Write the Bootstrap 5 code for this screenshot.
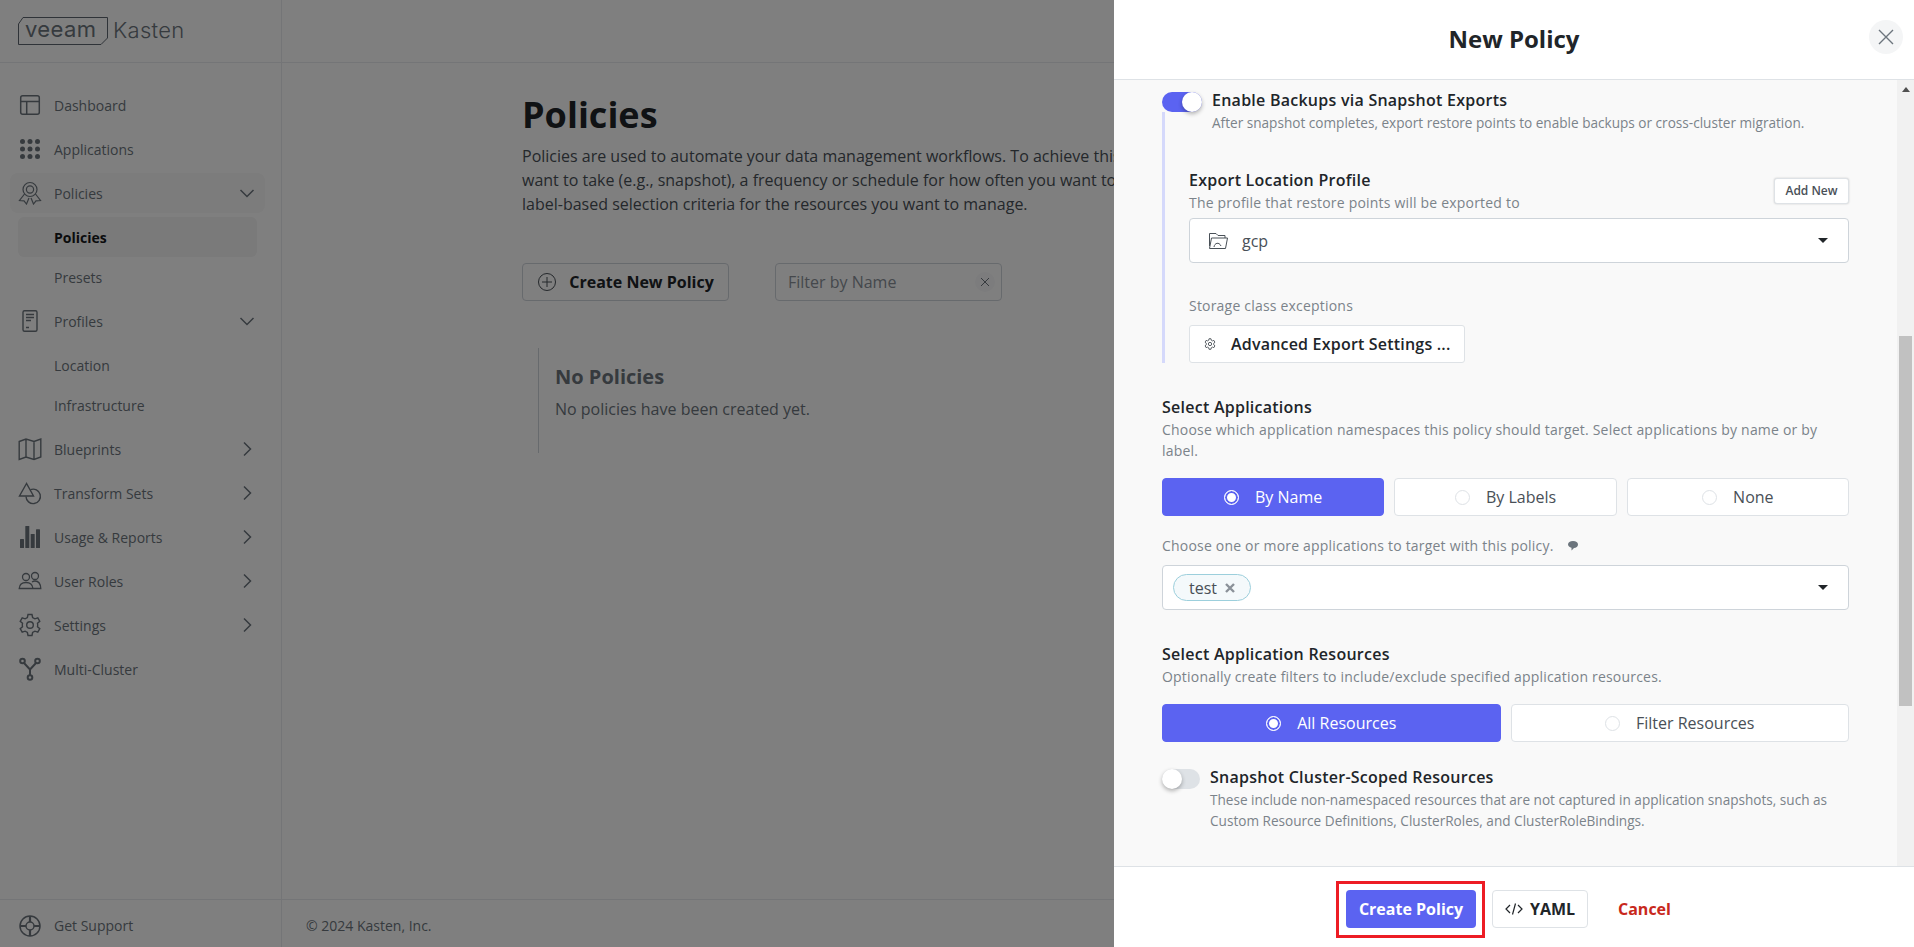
<!DOCTYPE html>
<html lang="en">
  <head>
    <meta charset="UTF-8" />
    <meta name="viewport" content="width=device-width, initial-scale=1.0" />
    <title>Policies - Veeam Kasten</title>
    <link
      href="https://cdn.jsdelivr.net/npm/bootstrap@5.3.2/dist/css/bootstrap.min.css"
      rel="stylesheet"
    />
    <style>
      body {
        font-family: "Open Sans", sans-serif;
        font-size: 14px;
        overflow: hidden;
        color: #212529;
      }
      .app-shell {
        height: 947px;
      }
      /* left navigation */
      .side-col {
        width: 282px;
        flex: none;
        border-right: 1px solid #e9ebee;
        color: #6c757d;
      }
      .logo-bar {
        height: 63px;
        flex: none;
        border-bottom: 1px solid #e9ebee;
        padding: 17px 0 0 18px;
      }
      .side-nav {
        padding: 20px 16px 0 10px;
      }
      .nav-row {
        height: 44px;
        padding: 0 10px;
        color: #6c757d;
        text-decoration: none;
      }
      .nav-row svg.nav-ico {
        width: 24px;
        height: 24px;
        margin-left: -2px;
        margin-right: 12px;
        flex: none;
      }
      .nav-chev {
        width: 18px;
        height: 18px;
        margin-right: -1px;
      }
      .nav-row.is-open {
        height: 40px;
        margin-top: 2px;
        margin-bottom: 2px;
        background: #f8f8f8;
        border-radius: 8px;
      }
      .sub-group {
        padding: 2px 0;
      }
      .sub-row {
        height: 40px;
        padding-left: 36px;
        margin: 0 8px;
        color: #6c757d;
        text-decoration: none;
      }
      .sub-row.is-current {
        background: #f4f4f4;
        border-radius: 6px;
        font-weight: 700;
        color: #16181b;
      }
      .side-foot {
        height: 48px;
        flex: none;
        border-top: 1px solid #e9ebee;
        padding: 4px 20px 0;
      }
      .side-foot svg {
        width: 24px;
        height: 24px;
        margin-left: -2px;
        margin-right: 12px;
      }
      /* main column */
      .top-gap {
        height: 63px;
        flex: none;
        border-bottom: 1px solid #e9ebee;
      }
      .main-body {
        padding: 27px 0 0 240px;
      }
      .page-title {
        font-size: 36px;
        font-weight: 700;
        line-height: 50px;
        margin: 0 0 4px;
        color: #212529;
      }
      .page-desc {
        font-size: 16px;
        line-height: 24px;
        color: #495057;
        white-space: nowrap;
        margin: 0 0 47px;
      }
      .new-btn {
        width: 207px;
        height: 38px;
        font-size: 16px;
        font-weight: 700;
        color: #212529;
        background: #fff;
        border: 1px solid #ced4da;
        border-radius: 4px;
      }
      .new-btn svg {
        width: 20px;
        height: 20px;
      }
      .filter-wrap {
        width: 227px;
        margin-left: 46px;
      }
      .filter-input {
        height: 38px;
        font-size: 16px;
        border-color: #ced4da;
        border-radius: 4px;
        padding-left: 12px;
      }
      .filter-input::placeholder {
        color: #8a9199;
      }
      .filter-x {
        width: 20px;
        height: 20px;
        top: 9px;
        right: 7px;
        border-radius: 50%;
        background: #f8f9fa;
      }
      .empty-box {
        margin: 47px 0 0 16px;
        height: 105px;
        border-left: 1px solid #ced4da;
        padding: 14px 0 0 16px;
        color: #6c757d;
      }
      .empty-title {
        font-size: 20px;
        font-weight: 700;
        line-height: 30px;
        margin: 0 0 5px;
        color: #6c757d;
      }
      .empty-text {
        font-size: 16px;
        line-height: 24px;
        margin: 0;
      }
      .main-foot {
        height: 48px;
        flex: none;
        border-top: 1px solid #e9ebee;
        padding: 4px 0 0 24px;
        color: #6c757d;
      }
      /* overlay and panel */
      .dim-layer {
        position: fixed;
        inset: 0;
        background: rgba(0, 0, 0, 0.5);
      }
      .side-panel {
        position: fixed;
        top: 0;
        right: 0;
        bottom: 0;
        width: 800px;
        background: #fff;
      }
      .panel-head {
        height: 80px;
        flex: none;
        border-bottom: 1px solid #dee2e6;
      }
      .panel-title {
        font-size: 24px;
        font-weight: 700;
        margin: 0;
        color: #212529;
      }
      .panel-close {
        width: 34px;
        height: 34px;
        top: 20px;
        right: 11px;
        border: 0;
        border-radius: 50%;
        background: #f4f5f6;
        padding: 0;
      }
      .panel-mid {
        min-height: 0;
        background: #f9f9f9;
      }
      .panel-form {
        padding: 12px 48px 0 48px;
        width: 783px;
        flex: none;
      }
      .fake-scroll {
        width: 17px;
        flex: none;
        background: #f1f1f1;
      }
      .scroll-up {
        width: 0;
        height: 0;
        margin: 7px auto 0;
        border-left: 4px solid transparent;
        border-right: 4px solid transparent;
        border-bottom: 5px solid #505050;
      }
      .scroll-thumb {
        height: 370px;
        margin: 244px 2px 0;
        background: #c1c1c1;
      }
      .tog-row {
        gap: 10px;
      }
      .tog {
        width: 38px;
        height: 20px;
        flex: none;
        border-radius: 10px;
        background: #dee2e6;
        position: relative;
      }
      .tog::after {
        content: "";
        position: absolute;
        top: 0;
        left: 0;
        width: 20px;
        height: 20px;
        border-radius: 50%;
        background: #fff;
        box-shadow: 0 2px 4px rgba(0, 0, 0, 0.3);
      }
      .tog.is-on {
        width: 40px;
        background: #5b63f1;
      }
      .tog.is-on::after {
        left: 20px;
      }
      .tog-text {
        margin-top: -2px;
      }
      .opt-title {
        font-size: 16px;
        font-weight: 600;
        line-height: 20px;
        letter-spacing: 0.25px;
        margin-bottom: 2px;
        color: #212529;
      }
      .opt-help {
        font-size: 14px;
        line-height: 21px;
        letter-spacing: 0.2px;
        color: #7b838a;
      }
      .tog-text .opt-help {
        font-size: 13.6px;
        letter-spacing: 0;
      }
      .sec-indent {
        margin-top: -21px;
        border-left: 3px solid #d5d9fb;
        padding: 58px 0 0 24px;
      }
      .addnew-btn {
        width: 75px;
        height: 26px;
        margin-top: 8px;
        padding: 0;
        font-size: 12px;
        font-weight: 600;
        color: #495057;
        background: #fff;
        border: 1px solid #dee2e6;
        border-radius: 3px;
        box-shadow: 0 0 2px rgba(0, 0, 0, 0.2);
      }
      .sel-box {
        height: 45px;
        background: #fff;
        border: 1px solid #ced4da;
        border-radius: 4px;
        padding: 0 20px 0 18px;
      }
      .sel-box.has-tag {
        margin-top: 9px;
        padding-left: 10px;
      }
      .sel-top {
        margin-top: 5px;
      }
      .sel-caret {
        width: 0;
        height: 0;
        border-left: 5px solid transparent;
        border-right: 5px solid transparent;
        border-top: 5px solid #212529;
      }
      .sel-value {
        font-size: 16px;
        margin-left: 13px;
        color: #495057;
      }
      .storage-note {
        margin-top: 32px;
      }
      .adv-btn {
        width: 276px;
        height: 38px;
        margin-top: 9px;
        gap: 15px;
        font-size: 16px;
        font-weight: 600;
        letter-spacing: 0.2px;
        color: #212529;
        background: #fff;
        border: 1px solid #dee2e6;
        border-radius: 3px;
        padding: 0 0 0 14px;
      }
      .sec-head {
        margin-top: 34px;
      }
      .choice-row {
        gap: 10px;
        margin-top: 17px;
      }
      .choice-tile {
        flex: 1 1 0;
        height: 38px;
        padding: 0;
        font-size: 16px;
        color: #495057;
        background: #fff;
        border: 1px solid #dee2e6;
        border-radius: 4px;
        gap: 16px;
      }
      .choice-tile .dot-ring {
        width: 15px;
        height: 15px;
        border-radius: 50%;
        border: 1px solid #dee2e6;
        background: #fff;
      }
      .choice-tile.is-picked {
        background: #5b63f1;
        border-color: #5b63f1;
        color: #fff;
      }
      .choice-tile.is-picked .dot-ring {
        border-color: #fff;
        background: #fff;
        box-shadow: inset 0 0 0 2px #5b63f1;
      }
      .hint-line {
        margin-top: 19px;
        gap: 13px;
      }
      .tag-chip {
        height: 27px;
        padding: 0 15px;
        gap: 8px;
        font-size: 16px;
        color: #495057;
        background: #f4f9fb;
        border: 1px solid #9ccfdc;
        border-radius: 14px;
      }
      .cluster-row {
        margin-top: 27px;
      }
      .footer-bar {
        height: 81px;
        flex: none;
        border-top: 1px solid #dee2e6;
        padding-top: 14px;
      }
      .mark-box {
        border: 3px solid #ed1c24;
        padding: 6px 6px 7px 7px;
        margin-left: 222px;
      }
      .go-btn {
        width: 130px;
        height: 38px;
        padding: 0;
        font-size: 16px;
        font-weight: 700;
        color: #fff;
        background: #5b63f1;
        border: 0;
        border-radius: 4px;
      }
      .yaml-btn {
        width: 96px;
        height: 38px;
        padding: 0;
        margin: 9px 0 0 7px;
        font-size: 16px;
        font-weight: 700;
        color: #212529;
        background: #fff;
        border: 1px solid #dee2e6;
        border-radius: 4px;
        gap: 7px;
      }
      .cancel-btn {
        height: 38px;
        font-size: 16px;
        font-weight: 700;
        color: #c8281c;
        background: none;
        border: 0;
        padding: 0;
        margin: 9px 0 0 30px;
      }
    </style>
  </head>
  <body>
    <div class="app-shell d-flex">
      <!-- Sidebar -->
      <aside class="side-col d-flex flex-column">
        <div class="logo-bar">
          <svg width="168" height="28" viewBox="0 0 168 28" fill="none">
            <path d="M5 .5H89.500V21L83 27.500H.5V7Z" stroke="#5f6771" stroke-width="1" />
            <text x="7" y="20" font-family="Inter, sans-serif" font-size="22" fill="#6c757d" letter-spacing=".4">veeam</text>
            <text x="95" y="21" font-family="Inter, sans-serif" font-size="22" font-weight="300" fill="#6c757d" letter-spacing=".3">Kasten</text>
          </svg>
        </div>
        <nav class="side-nav flex-grow-1">
          <a href="#" class="nav-row d-flex align-items-center">
            <svg class="nav-ico" viewBox="0 0 24 24" fill="none" stroke="currentColor" stroke-width="1.5"><rect x="2.7" y="2.7" width="18.6" height="18.6" rx="2" /><path d="M2.7 8.5H21.3M8.7 8.5V21.3" /></svg>
            <span>Dashboard</span>
          </a>
          <a href="#" class="nav-row d-flex align-items-center">
            <svg class="nav-ico" viewBox="0 0 24 24" fill="currentColor"><circle cx="4.5" cy="4.5" r="2.5" /><circle cx="12" cy="4.5" r="2.5" /><circle cx="19.5" cy="4.5" r="2.5" /><circle cx="4.5" cy="12" r="2.5" /><circle cx="12" cy="12" r="2.5" /><circle cx="19.5" cy="12" r="2.5" /><circle cx="4.5" cy="19.5" r="2.5" /><circle cx="12" cy="19.5" r="2.5" /><circle cx="19.5" cy="19.5" r="2.5" /></svg>
            <span>Applications</span>
          </a>
          <a href="#" class="nav-row is-open d-flex align-items-center">
            <svg class="nav-ico" viewBox="0 0 24 24" fill="none" stroke="currentColor" stroke-width="1.2"><circle cx="12" cy="8.5" r="7" /><circle cx="12" cy="8.5" r="3.6" /><path d="M6.5 13 1.5 19.5 6 19.8 8.5 23 11 17M17.5 13 22.5 19.5 18 19.8 15.5 23 13 17" /></svg>
            <span class="flex-grow-1">Policies</span>
            <svg class="nav-chev" viewBox="0 0 18 18" fill="none" stroke="currentColor" stroke-width="1.5"><path d="M2.5 6 9 12.5 15.5 6" /></svg>
          </a>
          <div class="sub-group">
            <a href="#" class="sub-row is-current d-flex align-items-center">Policies</a>
            <a href="#" class="sub-row d-flex align-items-center">Presets</a>
          </div>
          <a href="#" class="nav-row d-flex align-items-center">
            <svg class="nav-ico" viewBox="0 0 24 24" fill="none" stroke="currentColor" stroke-width="1.4"><rect x="5" y="1.7" width="14" height="20.6" rx="1.5" /><path d="M8 5.5H16M8 8.5H16M8 11.5H13M8 18.5H11" /></svg>
            <span class="flex-grow-1">Profiles</span>
            <svg class="nav-chev" viewBox="0 0 18 18" fill="none" stroke="currentColor" stroke-width="1.5"><path d="M2.5 6 9 12.5 15.5 6" /></svg>
          </a>
          <div class="sub-group">
            <a href="#" class="sub-row d-flex align-items-center">Location</a>
            <a href="#" class="sub-row d-flex align-items-center">Infrastructure</a>
          </div>
          <a href="#" class="nav-row d-flex align-items-center">
            <svg class="nav-ico" viewBox="0 0 24 24" fill="none" stroke="currentColor" stroke-width="1.4"><path d="M1.2 4.5 8 2l8 2.5L22.8 2V20L16 22.5 8 20 1.2 22.5ZM8 2V20M16 4.5V22.5" /></svg>
            <span class="flex-grow-1">Blueprints</span>
            <svg class="nav-chev" viewBox="0 0 18 18" fill="none" stroke="currentColor" stroke-width="1.5"><path d="M6 2.5 12.5 9 6 15.5" /></svg>
          </a>
          <a href="#" class="nav-row d-flex align-items-center">
            <svg class="nav-ico" viewBox="0 0 24 24" fill="none" stroke="currentColor" stroke-width="1.4"><path d="M8.5 2.5 1.5 15H15.5Z" /><path d="M12.5 8.7A7.2 7.2 0 1 1 8 15.5" /></svg>
            <span class="flex-grow-1">Transform Sets</span>
            <svg class="nav-chev" viewBox="0 0 18 18" fill="none" stroke="currentColor" stroke-width="1.5"><path d="M6 2.5 12.5 9 6 15.5" /></svg>
          </a>
          <a href="#" class="nav-row d-flex align-items-center">
            <svg class="nav-ico" viewBox="0 0 24 24" fill="currentColor"><rect x="2" y="14" width="4" height="9" rx=".5" /><rect x="7.300" y="1" width="4" height="22" rx=".5" /><rect x="12.700" y="9" width="4" height="14" rx=".5" /><rect x="18" y="4.300" width="4" height="18.700" rx=".5" /></svg>
            <span class="flex-grow-1">Usage &amp; Reports</span>
            <svg class="nav-chev" viewBox="0 0 18 18" fill="none" stroke="currentColor" stroke-width="1.5"><path d="M6 2.5 12.5 9 6 15.5" /></svg>
          </a>
          <a href="#" class="nav-row d-flex align-items-center">
            <svg class="nav-ico" viewBox="0 0 24 24" fill="none" stroke="currentColor" stroke-width="1.3"><circle cx="8" cy="8" r="3.5" /><circle cx="17" cy="7" r="3.5" /><path d="M1.2 19.5C1.5 15.5 4.5 13.5 8 13.5S14.5 15.5 15 19.5ZM14 13C15 12.3 16 12 17 12 20 12 22.5 14.5 22.8 19.5H15" /></svg>
            <span class="flex-grow-1">User Roles</span>
            <svg class="nav-chev" viewBox="0 0 18 18" fill="none" stroke="currentColor" stroke-width="1.5"><path d="M6 2.5 12.5 9 6 15.5" /></svg>
          </a>
          <a href="#" class="nav-row d-flex align-items-center">
            <svg class="nav-ico" viewBox="0 0 24 24" fill="none" stroke="currentColor" stroke-width="1.4"><circle cx="12" cy="12" r="3.3" /><path d="M10 1.5h4l.6 3 2.3 1.3 2.9-1 2 3.5-2.3 2a7 7 0 0 1 0 3.4l2.3 2-2 3.5-2.9-1-2.3 1.3-.6 3h-4l-.6-3-2.3-1.3-2.9 1-2-3.5 2.3-2a7 7 0 0 1 0-3.4l-2.3-2 2-3.5 2.9 1 2.3-1.3Z" /></svg>
            <span class="flex-grow-1">Settings</span>
            <svg class="nav-chev" viewBox="0 0 18 18" fill="none" stroke="currentColor" stroke-width="1.5"><path d="M6 2.5 12.5 9 6 15.5" /></svg>
          </a>
          <a href="#" class="nav-row d-flex align-items-center">
            <svg class="nav-ico" viewBox="0 0 24 24" fill="none" stroke="currentColor" stroke-width="2"><circle cx="4.5" cy="4" r="2.3" /><circle cx="19.5" cy="4" r="2.3" /><circle cx="12" cy="20.500" r="2.300" /><path d="M6 6 12 12.500 18 6M12 12.500V18" /></svg>
            <span>Multi-Cluster</span>
          </a>
        </nav>
        <div class="side-foot d-flex align-items-center">
          <svg viewBox="0 0 24 24" fill="none" stroke="currentColor" stroke-width="1.500"><circle cx="12" cy="12" r="10" /><circle cx="12" cy="12" r="4" /><path stroke-width="2.200" d="M12 2V8M12 16V22M2 12H8M16 12H22" /></svg>
          <span>Get Support</span>
        </div>
      </aside>

      <!-- Main content -->
      <main class="flex-grow-1 d-flex flex-column">
        <div class="top-gap"></div>
        <div class="main-body flex-grow-1">
          <h1 class="page-title">Policies</h1>
          <p class="page-desc">
            Policies are used to automate your data management workflows. To achieve this, you will define the actions you<br />
            want to take (e.g., snapshot), a frequency or schedule for how often you want to take that action, and<br />
            label-based selection criteria for the resources you want to manage.
          </p>
          <div class="d-flex align-items-center">
            <button class="btn new-btn d-flex align-items-center justify-content-center gap-2" type="button">
              <svg viewBox="0 0 20 20" fill="none" stroke="#495057" stroke-width="1"><circle cx="10" cy="10" r="8.5" /><path d="M10 5V15M5 10H15" /></svg>
              <span class="ms-1">Create New Policy</span>
            </button>
            <div class="filter-wrap position-relative">
              <input class="form-control filter-input" type="text" placeholder="Filter by Name" />
              <span class="filter-x position-absolute d-flex align-items-center justify-content-center">
                <svg width="10" height="10" viewBox="0 0 10 10" stroke="#6c757d" stroke-width="1"><path d="M1 1 9 9M9 1 1 9" /></svg>
              </span>
            </div>
          </div>
          <div class="empty-box">
            <h5 class="empty-title">No Policies</h5>
            <p class="empty-text">No policies have been created yet.</p>
          </div>
        </div>
        <div class="main-foot d-flex align-items-center">© 2024 Kasten, Inc.</div>
      </main>
    </div>

    <div class="dim-layer"></div>

    <!-- New Policy panel -->
    <section class="side-panel d-flex flex-column">
      <div class="panel-head position-relative d-flex align-items-center justify-content-center">
        <h2 class="panel-title">New Policy</h2>
        <button class="panel-close position-absolute d-flex align-items-center justify-content-center" type="button" aria-label="Close">
          <svg width="16" height="16" viewBox="0 0 16 16" stroke="#6c757d" stroke-width="1.4"><path d="M1 1 15 15M15 1 1 15" /></svg>
        </button>
      </div>

      <div class="panel-mid flex-grow-1 d-flex">
        <div class="panel-form">
          <div class="tog-row d-flex align-items-start">
            <span class="tog is-on"></span>
            <div class="tog-text">
              <div class="opt-title">Enable Backups via Snapshot Exports</div>
              <div class="opt-help">After snapshot completes, export restore points to enable backups or cross-cluster migration.</div>
            </div>
          </div>

          <div class="sec-indent">
            <div class="d-flex justify-content-between align-items-start">
              <div>
                <div class="opt-title">Export Location Profile</div>
                <div class="opt-help">The profile that restore points will be exported to</div>
              </div>
              <button class="btn addnew-btn" type="button">Add New</button>
            </div>
            <div class="sel-box sel-top d-flex align-items-center justify-content-between">
              <div class="d-flex align-items-center">
                <svg width="21" height="20" viewBox="0 0 21 20" fill="none" stroke="#495057" stroke-width="1"><path d="M1.500 15V2.500H8L10 4.500H17V7M1.500 17.500 3.500 7H19.500L17.500 17.500ZM6 16C6.500 12 11 10.500 13 15" /></svg>
                <span class="sel-value">gcp</span>
              </div>
              <span class="sel-caret"></span>
            </div>
            <div class="opt-help storage-note">Storage class exceptions</div>
            <button class="btn adv-btn d-flex align-items-center" type="button">
              <svg width="12" height="12" viewBox="0 0 24 24" fill="none" stroke="#495057" stroke-width="1.800"><circle cx="12" cy="12" r="3.300" /><path d="M10 1.500h4l.6 3 2.300 1.300 2.900-1 2 3.500-2.300 2a7 7 0 0 1 0 3.400l2.300 2-2 3.500-2.900-1-2.300 1.300-.6 3h-4l-.6-3-2.300-1.300-2.900 1-2-3.500 2.300-2a7 7 0 0 1 0-3.400l-2.300-2 2-3.500 2.900 1 2.300-1.300Z" /></svg>
              <span>Advanced Export Settings ...</span>
            </button>
          </div>

          <div class="sec-head">
            <div class="opt-title">Select Applications</div>
            <div class="opt-help">Choose which application namespaces this policy should target. Select applications by name or by label.</div>
          </div>
          <div class="choice-row d-flex">
            <button class="btn choice-tile is-picked d-flex align-items-center justify-content-center" type="button"><span class="dot-ring"></span><span>By Name</span></button>
            <button class="btn choice-tile d-flex align-items-center justify-content-center" type="button"><span class="dot-ring"></span><span>By Labels</span></button>
            <button class="btn choice-tile d-flex align-items-center justify-content-center" type="button"><span class="dot-ring"></span><span>None</span></button>
          </div>
          <div class="opt-help hint-line d-flex align-items-center">
            <span>Choose one or more applications to target with this policy.</span>
            <svg width="12" height="12" viewBox="0 0 12 12" fill="#6c757d"><path d="M6 1C9 1 11 2.300 11 4.500 11 6.500 9 8 7 8L4.500 10.500 4.500 7.700C2.500 7.300 1 6 1 4.500 1 2.300 3 1 6 1Z" /></svg>
          </div>
          <div class="sel-box has-tag d-flex align-items-center justify-content-between">
            <span class="tag-chip d-inline-flex align-items-center">
              <span>test</span>
              <svg width="10" height="10" viewBox="0 0 10 10" stroke="#8a9199" stroke-width="2.400"><path d="M1 1 9 9M9 1 1 9" /></svg>
            </span>
            <span class="sel-caret"></span>
          </div>

          <div class="sec-head">
            <div class="opt-title">Select Application Resources</div>
            <div class="opt-help">Optionally create filters to include/exclude specified application resources.</div>
          </div>
          <div class="choice-row d-flex">
            <button class="btn choice-tile is-picked d-flex align-items-center justify-content-center" type="button"><span class="dot-ring"></span><span>All Resources</span></button>
            <button class="btn choice-tile d-flex align-items-center justify-content-center" type="button"><span class="dot-ring"></span><span>Filter Resources</span></button>
          </div>
          <div class="tog-row cluster-row d-flex align-items-start">
            <span class="tog"></span>
            <div class="tog-text">
              <div class="opt-title">Snapshot Cluster-Scoped Resources</div>
              <div class="opt-help">These include non-namespaced resources that are not captured in application snapshots, such as Custom Resource Definitions, ClusterRoles, and ClusterRoleBindings.</div>
            </div>
          </div>
        </div>
        <div class="fake-scroll">
          <div class="scroll-up"></div>
          <div class="scroll-thumb"></div>
        </div>
      </div>

      <div class="footer-bar d-flex align-items-start">
        <div class="mark-box">
          <button class="btn go-btn d-block" type="button">Create Policy</button>
        </div>
        <button class="btn yaml-btn d-flex align-items-center justify-content-center" type="button">
          <svg width="18" height="14" viewBox="0 0 18 14" fill="none" stroke="#212529" stroke-width="1.200"><path d="M5 3 1 7 5 11M13 3 17 7 13 11M10.500 1.500 7.500 12.500" /></svg>
          <span>YAML</span>
        </button>
        <button class="btn cancel-btn" type="button">Cancel</button>
      </div>
    </section>

    <script src="https://cdn.jsdelivr.net/npm/bootstrap@5.3.2/dist/js/bootstrap.bundle.min.js"></script>
  </body>
</html>
